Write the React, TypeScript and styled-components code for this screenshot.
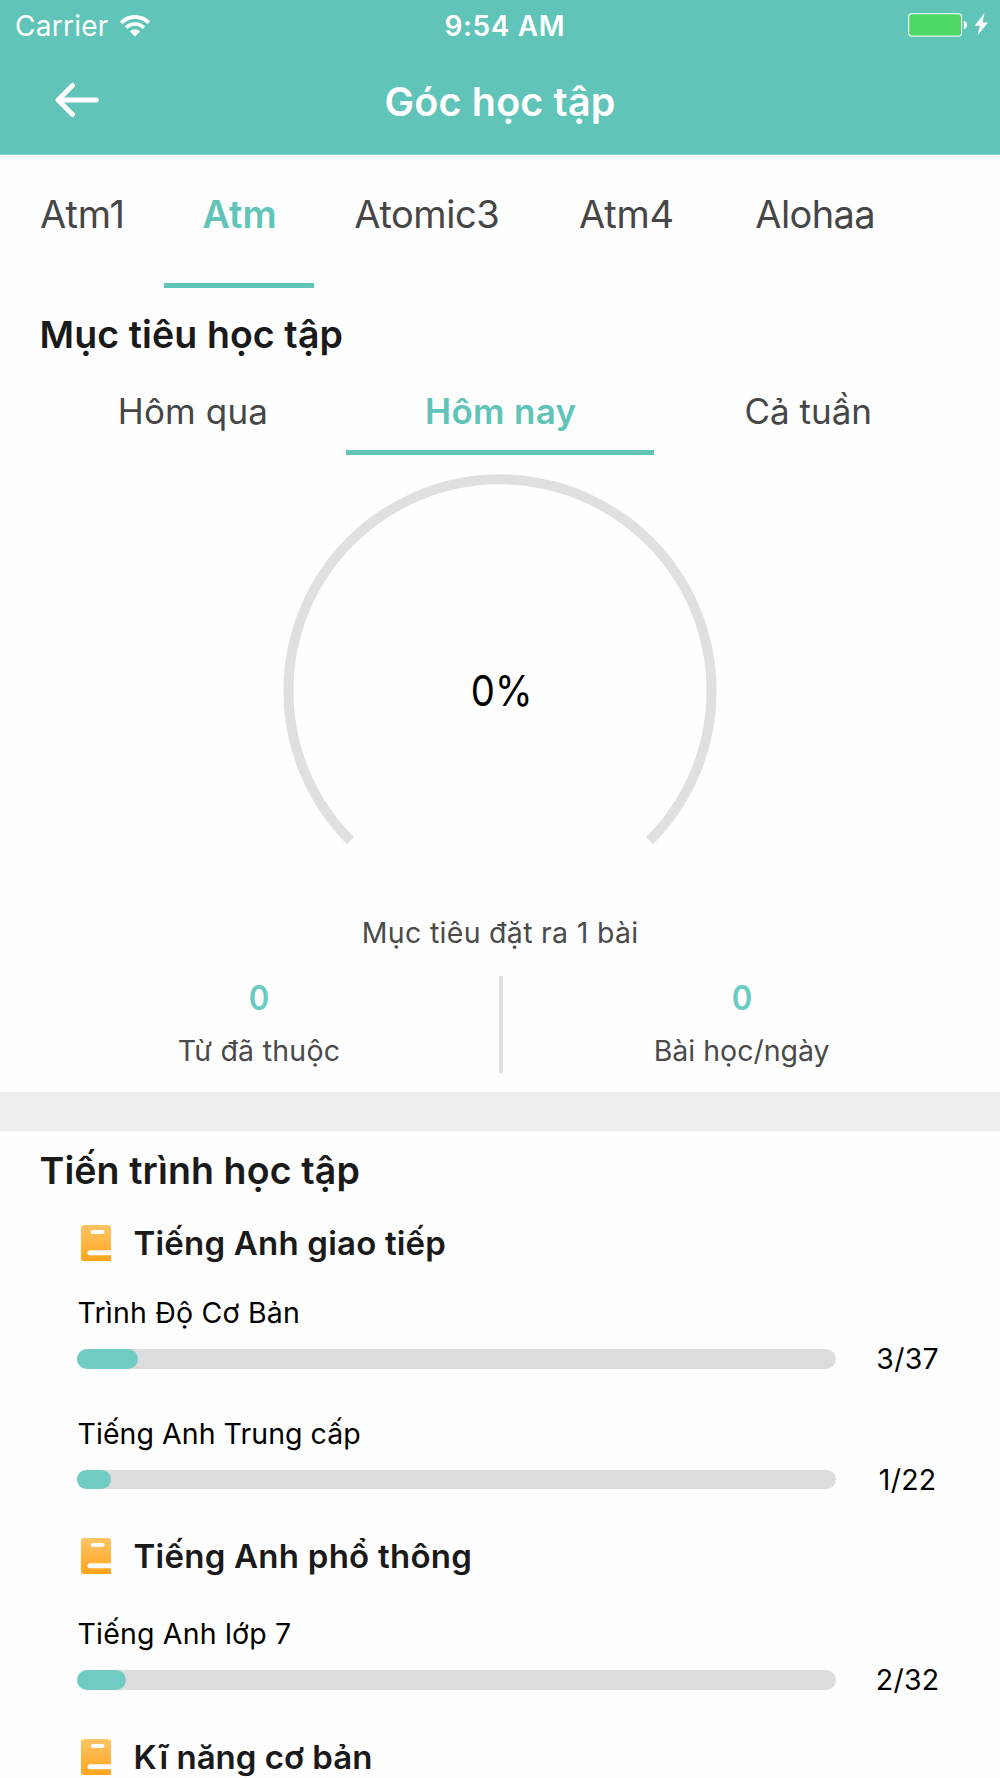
import React from "react";
import styled, { createGlobalStyle } from "styled-components";

const TEAL = "#60c4b8";
const INK = "#1a1a1a";
const GREY = "#464646";

const GlobalStyle = createGlobalStyle`
  * { box-sizing: border-box; }
  body { margin: 0; background: #fefefe; }
`;

const Screen = styled.main`
  width: 1000px;
  height: 1778px;
  overflow: hidden;
  display: flex;
  flex-direction: column;
  background: #fefefe;
  font-family: Inter, "Noto Sans", sans-serif;
`;

const Label = styled.span<{ $size: number; $ls?: number; $bold?: boolean; $color?: string }>`
  font-size: ${(p) => p.$size}px;
  letter-spacing: ${(p) => p.$ls ?? 0}px;
  margin-right: ${(p) => -(p.$ls ?? 0)}px;
  font-weight: ${(p) => (p.$bold ? 600 : 400)};
  color: ${(p) => p.$color ?? "#000"};
  white-space: nowrap;
`;

const Figure = styled(Label)<{ $narrow: number }>`
  display: inline-block;
  transform: scaleX(${(p) => p.$narrow});
`;

const Header = styled.header`
  flex: none;
  height: 155px;
  background: ${TEAL};
  border-bottom: 1px solid #8ed5cc;
`;

const StatusBar = styled.div`
  display: grid;
  grid-template-columns: 1fr auto 1fr;
  align-items: center;
  height: 51px;
  padding: 0 12px 0 15px;
`;

const Clock = styled.div`
  padding-left: 6px;
`;

const Carrier = styled.div`
  display: flex;
  align-items: center;
  gap: 12px;
`;

const Power = styled.div`
  display: flex;
  align-items: center;
  justify-content: flex-end;
  padding-bottom: 1px;
`;

const NavBar = styled.div`
  display: grid;
  grid-template-columns: 99px 1fr 99px;
  align-items: center;
  height: 103px;
`;

const BackButton = styled.button`
  display: flex;
  justify-content: flex-end;
  padding: 0;
  margin-top: -8px;
  border: 0;
  background: none;
`;

const NavTitle = styled.h1`
  margin: 0;
  text-align: center;
  line-height: 103px;
`;

const Tabs = styled.nav<{ $height: number; $inset?: number }>`
  flex: none;
  display: flex;
  height: ${(p) => p.$height}px;
  padding-left: ${(p) => p.$inset ?? 0}px;
`;

const Tab = styled.div<{ $width: number; $active?: boolean; $line: number }>`
  display: flex;
  justify-content: center;
  width: ${(p) => p.$width}px;
  padding-left: 1px;
  line-height: ${(p) => p.$line}px;
  border-bottom: 5px solid ${(p) => (p.$active ? TEAL : "transparent")};
`;

const SectionTitle = styled.h2<{ $height: number; $line: number }>`
  flex: none;
  margin: 0;
  height: ${(p) => p.$height}px;
  line-height: ${(p) => p.$line}px;
  padding-left: 39.5px;
`;

const Gauge = styled.div`
  flex: none;
  display: grid;
  place-items: center;
  align-content: start;
  height: 441px;
  padding-top: 19px;
  > * { grid-area: 1 / 1; }
`;

const GaugeValue = styled.div`
  padding: 0 0 2px 3px;
`;

const GoalText = styled.p`
  flex: none;
  display: flex;
  justify-content: center;
  margin: 0;
  height: 80px;
  line-height: 73px;
`;

const Stats = styled.div`
  flex: none;
  display: grid;
  grid-template-columns: 1fr 4.5px 1fr;
  height: 116px;
  padding: 0 17px 19.5px 19px;
`;

const Stat = styled.div<{ $shift?: number }>`
  display: flex;
  flex-direction: column;
  align-items: center;
  padding-right: ${(p) => p.$shift ?? 0}px;
`;

const StatValue = styled.div`
  height: 44px;
  line-height: 44px;
`;

const StatName = styled.div`
  height: 51px;
  line-height: 61px;
`;

const Divider = styled.div`
  background: #e0e0e0;
`;

const Band = styled.div`
  flex: none;
  height: 38.5px;
  background: #eeeeee;
`;

const Subject = styled.section`
  flex: none;
`;

const SubjectHead = styled.div<{ $height: number }>`
  display: flex;
  align-items: flex-start;
  gap: 23px;
  height: ${(p) => p.$height}px;
  padding-left: 80.5px;
  line-height: 36px;
`;

const Unit = styled.div`
  height: 120.5px;
  padding-left: 77px;
  &:last-child { height: 112.7px; }
`;

const UnitName = styled.div`
  height: 44px;
  line-height: 16px;
  padding-left: 0.5px;
`;

const UnitProgress = styled.div`
  display: flex;
  align-items: center;
  height: 19.5px;
`;

const Track = styled.div`
  width: 759px;
  height: 19.5px;
  border-radius: 10px;
  background: #dcdcdc;
`;

const Fill = styled.div`
  height: 100%;
  border-radius: 10px;
  background: #70cbc3;
`;

const Count = styled.div`
  display: flex;
  justify-content: center;
  width: 143px;
`;

const WifiIcon = () => (
  <svg width="30" height="22" viewBox="0 0 30 22" fill="none">
    <path d="M1.200 7.700A19.500 19.500 0 0 1 28.800 7.700" stroke="#fff" strokeWidth="3.800" />
    <path d="M6.160 12.660A12.500 12.500 0 0 1 23.840 12.660" stroke="#fff" strokeWidth="3.600" />
    <path d="M15 21.500L9.900 16.400A7.200 7.200 0 0 1 20.100 16.400Z" fill="#fff" />
  </svg>
);

const BatteryIcon = () => (
  <svg width="80" height="24" viewBox="0 0 80 24" fill="none">
    <rect x="0.6" y="0.6" width="53" height="22.6" rx="3.5" fill="#4cd964" stroke="#e6f6ee" strokeWidth="1.2" />
    <path d="M55.800 8Q59 8.600 59 12T55.800 16Z" fill="#fff" />
    <path d="M76.500 0L66.700 12.800H72L69.500 22.500L80 9.600H74.500Z" fill="#fff" />
  </svg>
);

const BackIcon = () => (
  <svg width="44" height="34" viewBox="0 0 44 34" fill="none" stroke="#fff" strokeWidth="4.800" strokeLinecap="round" strokeLinejoin="round">
    <path d="M17.500 2.500L3 17L17.500 31.500M3.500 17H41.500" />
  </svg>
);

const BookIcon = () => (
  <svg width="30" height="36" viewBox="0 0 30 36">
    <defs>
      <linearGradient id="book" x1="0" y1="0" x2="0" y2="1">
        <stop offset="0" stopColor="#ffc566" />
        <stop offset="1" stopColor="#ffa41c" />
      </linearGradient>
    </defs>
    <path fill="url(#book)" d="M3 0H27Q30 0 30 3V25.300H9A2.500 2.500 0 0 0 9 30.300H30V36H3Q0 36 0 33V3Q0 0 3 0Z" />
    <rect x="10" y="5" width="13.500" height="4" rx="2" fill="#fff" />
  </svg>
);

const topics = [
  { name: "Atm1", width: 164, ls: -0.1 },
  { name: "Atm", width: 150, ls: 0, active: true },
  { name: "Atomic3", width: 225, ls: -0.45 },
  { name: "Atm4", width: 174, ls: -0.2 },
  { name: "Alohaa", width: 204, ls: -0.6 },
];

const periods = [
  { name: "Hôm qua", ls: 0.15 },
  { name: "Hôm nay", ls: 0.3, active: true },
  { name: "Cả tuần", ls: 0 },
];

const subjects = [
  {
    name: "Tiếng Anh giao tiếp", ls: 0.2, head: 80.5,
    units: [
      { name: "Trình Độ Cơ Bản", ls: 0.2, count: "3/37", fill: 61 },
      { name: "Tiếng Anh Trung cấp", ls: 0.05, count: "1/22", fill: 34 },
    ],
  },
  {
    name: "Tiếng Anh phổ thông", ls: 0.25, head: 88,
    units: [{ name: "Tiếng Anh lớp 7", ls: 0.18, count: "2/32", fill: 49 }],
  },
  { name: "Kĩ năng cơ bản", ls: 0, head: 37, units: [] },
];

export default function App() {
  return (
    <Screen>
      <GlobalStyle />
      <Header>
        <StatusBar>
          <Carrier>
            <Label $size={28} $ls={0.25} $color="#fff">Carrier</Label>
            <WifiIcon />
          </Carrier>
          <Clock><Label $size={28} $ls={0.6} $bold $color="#fff">9:54 AM</Label></Clock>
          <Power><BatteryIcon /></Power>
        </StatusBar>
        <NavBar>
          <BackButton aria-label="Back"><BackIcon /></BackButton>
          <NavTitle><Label $size={39.5} $ls={0.15} $bold $color="#fff">Góc học tập</Label></NavTitle>
        </NavBar>
      </Header>

      <Tabs $height={132.5}>
        {topics.map((t) => (
          <Tab key={t.name} $width={t.width} $active={t.active} $line={119}>
            <Label $size={38} $ls={t.ls} $bold={t.active} $color={t.active ? TEAL : GREY}>{t.name}</Label>
          </Tab>
        ))}
      </Tabs>

      <SectionTitle $height={93} $line={93}>
        <Label $size={37.5} $ls={0.1} $bold $color={INK}>Mục tiêu học tập</Label>
      </SectionTitle>

      <Tabs $height={74.5} $inset={38.5}>
        {periods.map((t) => (
          <Tab key={t.name} $width={307.7} $active={t.active} $line={60}>
            <Label $size={35} $ls={t.ls} $bold={t.active} $color={t.active ? TEAL : GREY}>{t.name}</Label>
          </Tab>
        ))}
      </Tabs>

      <Gauge>
        <svg width="434" height="434" viewBox="-217 -217 434 434" fill="none">
          <path d="M-149.600 149.600A211.600 211.600 0 1 1 149.600 149.600" stroke="#e0e0e0" strokeWidth="10" />
        </svg>
        <GaugeValue><Figure $size={43} $narrow={0.89}>0%</Figure></GaugeValue>
      </Gauge>
      <GoalText><Label $size={28.5} $ls={0.3} $color="#4a4a4a">Mục tiêu đặt ra 1 bài</Label></GoalText>

      <Stats>
        <Stat>
          <StatValue><Figure $size={33.5} $narrow={0.93} $bold $color="#6acbc3">0</Figure></StatValue>
          <StatName><Label $size={28.5} $ls={0.25} $color="#4a4a4a">Từ đã thuộc</Label></StatName>
        </Stat>
        <Divider />
        <Stat $shift={3}>
          <StatValue><Figure $size={33.5} $narrow={0.93} $bold $color="#6acbc3">0</Figure></StatValue>
          <StatName><Label $size={28.5} $color="#4a4a4a">Bài học/ngày</Label></StatName>
        </Stat>
      </Stats>
      <Band />

      <SectionTitle $height={94} $line={80}>
        <Label $size={37.5} $ls={0.12} $bold $color={INK}>Tiến trình học tập</Label>
      </SectionTitle>

      {subjects.map((s) => (
        <Subject key={s.name}>
          <SubjectHead $height={s.head}>
            <BookIcon />
            <Label $size={33} $ls={s.ls} $bold $color={INK}>{s.name}</Label>
          </SubjectHead>
          {s.units.map((u) => (
            <Unit key={u.name}>
              <UnitName><Label $size={28.5} $ls={u.ls}>{u.name}</Label></UnitName>
              <UnitProgress>
                <Track><Fill style={{ width: u.fill }} /></Track>
                <Count><Label $size={28.5} $ls={0.25}>{u.count}</Label></Count>
              </UnitProgress>
            </Unit>
          ))}
        </Subject>
      ))}
    </Screen>
  );
}
